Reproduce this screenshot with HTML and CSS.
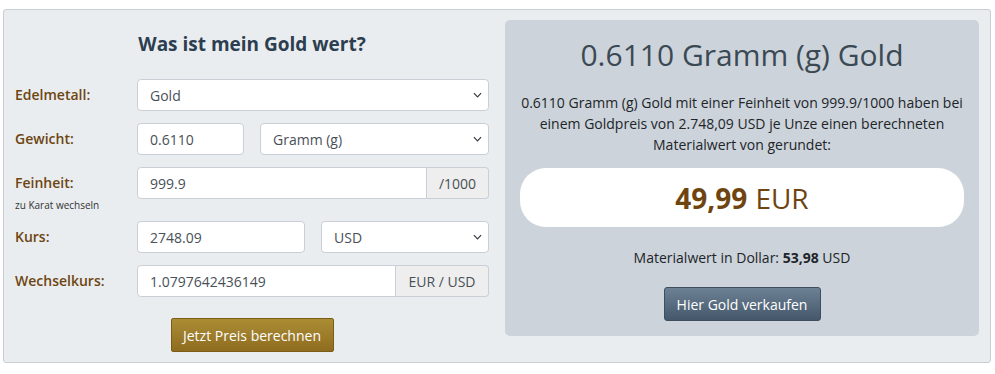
FILE: index.html
```html
<!DOCTYPE html>
<html lang="de">
<head>
<meta charset="utf-8">
<title>Was ist mein Gold wert?</title>
<link rel="stylesheet" href="styles.css">
</head>
<body>
<div class="calc">
  <div class="form-col">
    <h2 class="title">Was ist mein Gold wert?</h2>
    <div class="row">
      <div class="label"><span class="label-text">Edelmetall:</span></div>
      <div class="fields">
        <div class="select"><span>Gold</span><svg class="chev" viewBox="0 0 10 6" width="9" height="6"><path d="M1 1l4 4 4-4" fill="none" stroke="#343a40" stroke-width="1.3"/></svg></div>
      </div>
    </div>
    <div class="row">
      <div class="label"><span class="label-text">Gewicht:</span></div>
      <div class="fields split-weight">
        <div class="input">0.6110</div>
        <div class="select"><span>Gramm (g)</span><svg class="chev" viewBox="0 0 10 6" width="9" height="6"><path d="M1 1l4 4 4-4" fill="none" stroke="#343a40" stroke-width="1.3"/></svg></div>
      </div>
    </div>
    <div class="row row-tall">
      <div class="label"><span class="label-text">Feinheit:</span><span class="small-link">zu Karat wechseln</span></div>
      <div class="fields">
        <div class="group">
          <div class="input grow">999.9</div>
          <div class="addon">/1000</div>
        </div>
      </div>
    </div>
    <div class="row">
      <div class="label"><span class="label-text">Kurs:</span></div>
      <div class="fields split-half">
        <div class="input">2748.09</div>
        <div class="select"><span>USD</span><svg class="chev" viewBox="0 0 10 6" width="9" height="6"><path d="M1 1l4 4 4-4" fill="none" stroke="#343a40" stroke-width="1.3"/></svg></div>
      </div>
    </div>
    <div class="row">
      <div class="label"><span class="label-text">Wechselkurs:</span></div>
      <div class="fields">
        <div class="group">
          <div class="input grow">1.0797642436149</div>
          <div class="addon addon-wide">EUR / USD</div>
        </div>
      </div>
    </div>
    <div class="btn-wrap">
      <button class="btn-gold">Jetzt Preis berechnen</button>
    </div>
  </div>
  <div class="result">
    <h1 class="result-title">0.6110 Gramm (g) Gold</h1>
    <p class="result-text">0.6110 Gramm (g) Gold mit einer Feinheit von 999.9/1000 haben bei einem Goldpreis von 2.748,09 USD je Unze einen berechneten Materialwert von gerundet:</p>
    <div class="value-box"><strong>49,99</strong> EUR</div>
    <p class="dollar">Materialwert in Dollar: <strong>53,98</strong> USD</p>
    <div class="btn-wrap-right">
      <button class="btn-slate">Hier Gold verkaufen</button>
    </div>
  </div>
</div>
</body>
</html>
```

FILE: styles.css
```css
* { box-sizing: border-box; }
body {
  margin: 0;
  background: #ffffff;
  font-family: "Open Sans", "Noto Sans", sans-serif;
  font-size: 14px;
  color: #212529;
}
.calc {
  margin: 9px 4px 0 3px;
  width: 988px;
  background: #e9edf0;
  border: 1px solid #c9ced3;
  border-radius: 3px;
  padding: 10px 11px 10px 11px;
  display: grid;
  grid-template-columns: 474px 474px;
  column-gap: 16px;
  align-items: start;
}
.form-col { display: flex; flex-direction: column; }
.title {
  margin: 13px 0 23px;
  text-align: center;
  font-size: 19px;
  line-height: 23px;
  font-weight: 700;
  color: #2c3e50;
}
.row {
  display: grid;
  grid-template-columns: 122px 352px;
  margin-bottom: 12px;
}
.row-tall { margin-bottom: 10px; }
.label {
  display: flex;
  flex-direction: column;
  padding-top: 5px;
}
.label-text {
  font-weight: 600;
  font-size: 14px;
  line-height: 21px;
  color: #6e4511;
}
.small-link {
  font-size: 10px;
  line-height: 12px;
  color: #333;
  margin-top: 6px;
}
.fields { display: flex; }
.split-weight { display: grid; grid-template-columns: 107px 1fr; column-gap: 16px; }
.split-half { display: grid; grid-template-columns: 168px 1fr; column-gap: 16px; }
.input, .select {
  height: 32px;
  background: #fff;
  border: 1px solid #c8cfd6;
  border-radius: 4px;
  padding: 0 12px;
  display: flex;
  align-items: center;
  color: #495057;
  font-size: 14px;
}
.fields > .select { flex: 1; }
.select { justify-content: space-between; padding-right: 6px; }
.chev { flex: none; }
.group { display: flex; flex: 1; }
.group .grow { flex: 1; border-radius: 4px 0 0 4px; }
.addon {
  height: 32px;
  width: 62px;
  background: #eeeeee;
  border: 1px solid #c8cfd6;
  border-left: none;
  border-radius: 0 4px 4px 0;
  display: flex;
  align-items: center;
  justify-content: center;
  color: #495057;
  font-size: 14px;
}
.addon-wide { width: 93px; }
.btn-wrap { display: flex; justify-content: center; margin-top: 9px; }
.btn-gold {
  width: 163px;
  height: 34px;
  font-family: inherit;
  font-size: 14px;
  color: #fff;
  background: linear-gradient(#ab8d35, #8f6c1f);
  border: 1px solid #7c5d17;
  border-radius: 2px;
  padding: 0;
}
.result {
  background: #ccd3da;
  border-radius: 5px;
  padding: 17px 15px 15px;
  text-align: center;
}
.result-title {
  margin: 0;
  font-size: 30px;
  line-height: 36px;
  font-weight: 400;
  color: #3b4954;
}
.result-text {
  margin: 19px 0 0;
  line-height: 21px;
  color: #212529;
}
.value-box {
  margin-top: 13px;
  height: 59px;
  background: #fff;
  border-radius: 26px;
  display: flex;
  align-items: center;
  justify-content: center;
  font-size: 28px;
  color: #6e4511;
}
.value-box strong { font-weight: 700; margin-right: 8px; }
.dollar { margin: 20px 0 0; line-height: 21px; }
.dollar strong { font-weight: 700; }
.btn-wrap-right { display: flex; justify-content: center; margin-top: 19px; }
.btn-slate {
  width: 157px;
  height: 34px;
  font-family: inherit;
  font-size: 14px;
  color: #fff;
  background: linear-gradient(#6d8194, #45586b);
  border: 1px solid #3d4e5f;
  border-radius: 3px;
  padding: 0;
}
```
